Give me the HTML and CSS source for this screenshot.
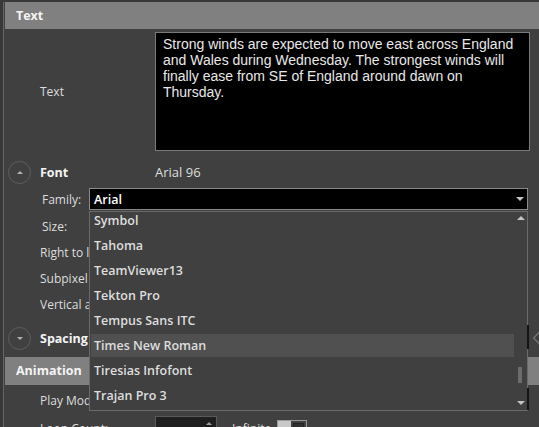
FILE: index.html
```html
<!DOCTYPE html>
<html lang="en">
<head>
  <meta charset="UTF-8">
  <title>Text Properties</title>
  <link rel="stylesheet" href="styles.css">
</head>
<body>

<div class="panel">
  <div class="band">Text</div>

  <div class="row row-text">
    <div class="label">Text</div>
    <div class="textbox">Strong winds are expected to move east across England and Wales during Wednesday. The strongest winds will finally ease from SE of England around dawn on Thursday.</div>
  </div>

  <div class="row row-group">
    <div class="group-head">
      <span class="expander"><span class="tri-up"></span></span>
      <span class="group-title">Font</span>
    </div>
    <div class="value">Arial 96</div>
  </div>

  <div class="row row-prop row-family">
    <span class="label">Family:</span>
    <div class="combo">
      <span>Arial</span>
      <span class="tri-down"></span>
    </div>
  </div>
  <div class="row row-prop row-size">
    <span class="label">Size:</span>
  </div>
  <div class="row row-prop">
    <span class="label wide">Right to left:</span>
  </div>
  <div class="row row-prop">
    <span class="label wide">Subpixel positioning:</span>
  </div>
  <div class="row row-prop">
    <span class="label wide">Vertical alignment:</span>
  </div>

  <div class="row row-group row-spacing">
    <div class="group-head">
      <span class="expander"><span class="tri-down small"></span></span>
      <span class="group-title">Spacing</span>
    </div>
  </div>

  <div class="band band-anim">Animation</div>

  <div class="row row-play">
    <span class="label">Play Mode:</span>
  </div>
  <div class="row row-loop">
    <span class="label">Loop Count:</span>
    <div class="loop-controls">
      <div class="spin"><span class="tri-up"></span></div>
      <span class="infinite">Infinite</span>
      <div class="switch"><span class="switch-on"></span><span class="switch-off"></span></div>
    </div>
  </div>
</div>

<!-- open font family list, drawn over the property rows -->
<div class="font-list">
  <div class="items">
    <div class="item first">Symbol</div>
    <div class="item">Tahoma</div>
    <div class="item">TeamViewer13</div>
    <div class="item">Tekton Pro</div>
    <div class="item">Tempus Sans ITC</div>
    <div class="item hover">Times New Roman</div>
    <div class="item">Tiresias Infofont</div>
    <div class="item">Trajan Pro 3</div>
  </div>
  <div class="scrollbar">
    <span class="tri-up"></span>
    <span class="thumb" style="margin-top: 147px"></span>
    <span class="fill"></span>
    <span class="tri-down"></span>
  </div>
</div>

<div class="side-grip">
  <span class="grip-bar"></span>
  <svg class="chevron" width="8" height="14" viewBox="0 0 8 14">
    <path d="M7.5 1 L1.5 7 L7.5 13" fill="none" stroke="#767676" stroke-width="1.2"/>
  </svg>
  <span class="grip-gap"></span>
  <span class="grip-bar"></span>
</div>

</body>
</html>
```

FILE: styles.css
```css
body {
  margin: 0;
  padding-top: 2px;
  height: 425px;
  overflow: hidden;
  background-color: #383838;
  font-family: "Open Sans", "Noto Sans", sans-serif;
  font-size: 12px;
  color: #dedede;
}

.panel {
  margin-left: 3px;
  padding-left: 1px;
  height: 425px;
  border-left: 1px solid #666;
  background-color: #404040;
}

.band {
  height: 27px;
  line-height: 27px;
  padding-left: 11px;
  background-color: #808080;
  color: #f4f4f4;
  font-weight: bold;
  font-size: 12.5px;
}

.band-anim {
  margin-top: 7px;
  height: 28px;
  line-height: 28px;
}

.row {
  display: flex;
  align-items: center;
}

.label {
  padding-left: 35px;
  white-space: nowrap;
}

.row-text {
  padding: 3px 0 9px 0;
}

.row-text .label {
  width: 115px;
}

.textbox {
  box-sizing: border-box;
  width: 375px;
  height: 119px;
  padding: 3px 7px;
  background-color: #000;
  border: 1px solid #7a7a7a;
  font-family: "Liberation Sans", Arial, sans-serif;
  font-size: 14px;
  line-height: 16px;
  color: #e8e8e8;
}

.row-group {
  height: 24px;
  margin-bottom: 2px;
}

.group-head {
  display: flex;
  align-items: center;
  width: 150px;
}

.expander {
  box-sizing: border-box;
  width: 23px;
  height: 23px;
  margin-left: 3px;
  border: 1px solid #5e5e5e;
  border-radius: 50%;
  display: flex;
  align-items: center;
  justify-content: center;
}

.group-title {
  margin-left: 9px;
  font-weight: bold;
  color: #f4f4f4;
  font-size: 12.5px;
}

.value {
  font-size: 13px;
}

.row-prop {
  height: 26px;
}

.row-prop .label {
  width: 47px;
  padding-left: 37px;
}

.row-size {
  margin-top: 1px;
}

.row-prop .label.wide {
  padding-left: 35px;
  width: 49px;
}

.row-spacing {
  margin-top: 9px;
  margin-bottom: 0;
}

.combo {
  box-sizing: border-box;
  width: 439px;
  height: 22px;
  padding: 0 3px 0 4px;
  display: flex;
  align-items: center;
  justify-content: space-between;
  background-color: #000;
  border: 1px solid #8a8a8a;
  color: #fff;
  font-weight: 600;
  font-size: 12.5px;
}

.tri-up, .tri-down {
  display: block;
  width: 0;
  height: 0;
  border-left: 4px solid transparent;
  border-right: 4px solid transparent;
}

.tri-up {
  border-bottom: 4px solid #c4c4c4;
}

.tri-down {
  border-top: 4px solid #c4c4c4;
}

.expander .tri-up, .expander .tri-down.small {
  border-left-width: 3px;
  border-right-width: 3px;
  border-bottom-color: #b0b0b0;
  border-top-color: #b0b0b0;
}

.expander .tri-down.small {
  border-top-width: 3px;
}

.expander .tri-up {
  border-bottom-width: 3px;
}

.row-play {
  height: 26px;
  margin-top: 2px;
}

.row-loop {
  align-items: flex-start;
  padding-top: 3px;
}

.row-loop .label {
  width: 115px;
  padding-top: 4px;
}

.loop-controls {
  display: flex;
  align-items: flex-start;
}

.spin {
  box-sizing: border-box;
  width: 62px;
  height: 24px;
  background-color: #1f1f1f;
  border: 1px solid #5a5a5a;
  display: flex;
  justify-content: flex-end;
  padding: 5px 4px 0 0;
}

.spin .tri-up {
  border-bottom-color: #9a9a9a;
  border-left-width: 3px;
  border-right-width: 3px;
  border-bottom-width: 3px;
}

.infinite {
  margin-left: 15px;
  padding-top: 4px;
}

.switch {
  display: flex;
  margin-left: 6px;
  margin-top: 4px;
  border: 1px solid #9a9a9a;
}

.switch-on {
  width: 13px;
  height: 18px;
  background-color: #c8c8c8;
}

.switch-off {
  box-sizing: border-box;
  width: 11px;
  height: 18px;
  margin: 2px;
  background-color: #303030;
  border: 1px solid #222;
}

/* drop-down list */
.font-list {
  position: absolute;
  left: 89px;
  top: 211px;
  box-sizing: border-box;
  width: 439px;
  height: 200px;
  display: flex;
  background-color: #404040;
  border: 1px solid #6a6a6a;
}

.items {
  flex: 1;
  overflow: hidden;
  padding-left: 1px;
}

.item {
  height: 23px;
  line-height: 23px;
  margin-bottom: 2px;
  padding-left: 3px;
  font-weight: 600;
  font-size: 12.5px;
  color: #dedede;
}

.item.first {
  margin-top: -3px;
}

.item.hover {
  background-color: #505050;
}

.scrollbar {
  width: 13px;
  display: flex;
  flex-direction: column;
  align-items: center;
  padding: 4px 0 5px 0;
}

.thumb {
  width: 4px;
  height: 16px;
  margin-right: 1px;
  background-color: #6c6c6c;
}

.fill {
  flex: 1;
}

.side-grip {
  position: absolute;
  left: 527px;
  top: 325px;
  width: 12px;
  height: 85px;
  display: flex;
  flex-direction: column;
}

.grip-bar {
  width: 2px;
  height: 24px;
  background-color: #141414;
}

.chevron {
  position: absolute;
  left: 5px;
  top: 6px;
}

.grip-gap {
  height: 39px;
}

.grip-bar:last-child {
  height: 22px;
}
```
